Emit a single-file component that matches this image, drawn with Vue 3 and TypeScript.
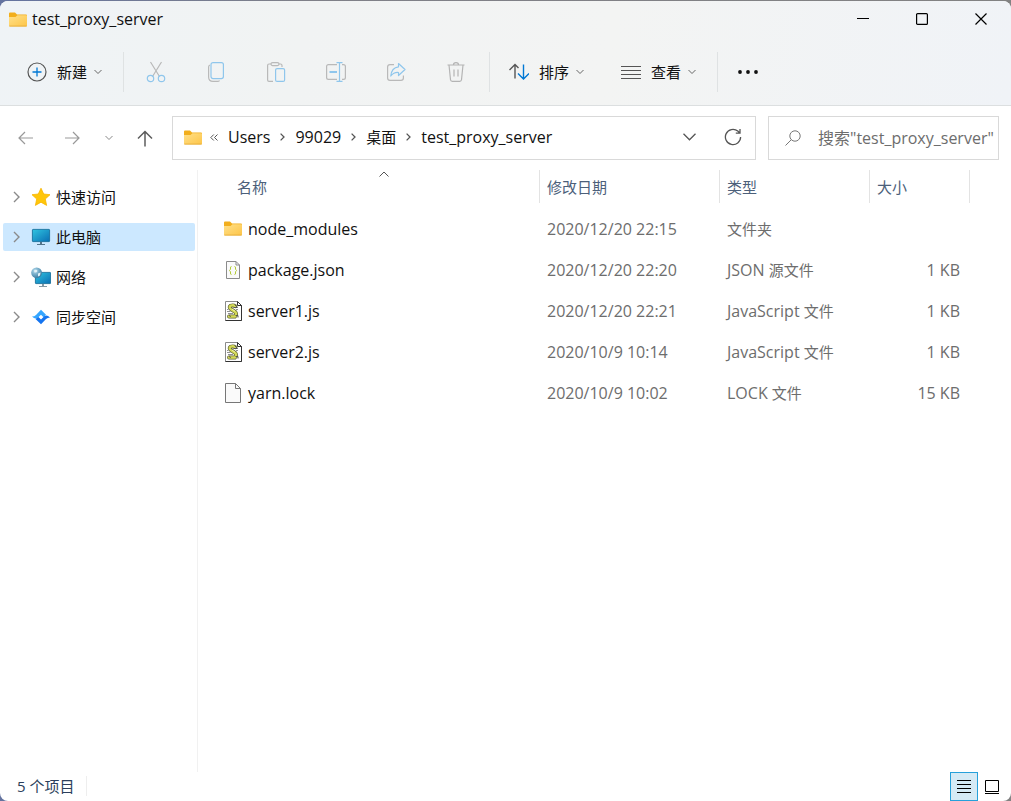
<script setup lang="ts">
import { ref } from 'vue'

interface Entry {
  name: string
  icon: 'folder' | 'json' | 'js' | 'blank'
  modified: string
  kind: string
  kindZh: string
  size: string
}

interface Place {
  label: string
  icon: 'star' | 'pc' | 'network' | 'sync'
}

const entries: Entry[] = [
  { name: 'node_modules', icon: 'folder', modified: '2020/12/20 22:15', kind: '', kindZh: '文件夹', size: '' },
  { name: 'package.json', icon: 'json', modified: '2020/12/20 22:20', kind: 'JSON', kindZh: '源文件', size: '1 KB' },
  { name: 'server1.js', icon: 'js', modified: '2020/12/20 22:21', kind: 'JavaScript', kindZh: '文件', size: '1 KB' },
  { name: 'server2.js', icon: 'js', modified: '2020/10/9 10:14', kind: 'JavaScript', kindZh: '文件', size: '1 KB' },
  { name: 'yarn.lock', icon: 'blank', modified: '2020/10/9 10:02', kind: 'LOCK', kindZh: '文件', size: '15 KB' },
]

const places: Place[] = [
  { label: '快速访问', icon: 'star' },
  { label: '此电脑', icon: 'pc' },
  { label: '网络', icon: 'network' },
  { label: '同步空间', icon: 'sync' },
]

const crumbs = [
  { label: 'Users', zh: false },
  { label: '99029', zh: false },
  { label: '桌面', zh: true },
  { label: 'test_proxy_server', zh: false },
]

const selected = ref('此电脑')
const query = ref('')
</script>

<template>
  <div class="window">
    <svg class="defs" width="0" height="0" aria-hidden="true">
      <defs>
        <linearGradient id="folder-fill" x1="0" y1="0" x2="1" y2="1">
          <stop offset="0" stop-color="#ffe08a" />
          <stop offset="1" stop-color="#fdc548" />
        </linearGradient>
        <linearGradient id="screen-fill" x1="0" y1="0" x2="1" y2="1">
          <stop offset="0" stop-color="#2fc4e0" />
          <stop offset="1" stop-color="#0a6fb4" />
        </linearGradient>
        <radialGradient id="globe-fill" cx="0.35" cy="0.3" r="0.8">
          <stop offset="0" stop-color="#b5dcee" />
          <stop offset="1" stop-color="#2a7199" />
        </radialGradient>
        <symbol id="folder" viewBox="0 0 18 15">
          <path d="M0 1.500Q0 .5 1 .5H6L8 2.500H17Q18 2.500 18 3.500V7H0Z" fill="#f2ae1c" />
          <path d="M0 5H6.500L8.500 3.200H17.200Q18 3.200 18 4V13.500Q18 14.500 17 14.500H1Q0 14.500 0 13.500Z" fill="url(#folder-fill)" />
          <path d="M.3 14.100H17.700" stroke="#e3a936" stroke-width=".8" />
        </symbol>
        <symbol id="chevron-down" viewBox="0 0 8 6">
          <path d="M.5 1L4 4.500L7.500 1" fill="none" stroke="currentColor" />
        </symbol>
        <symbol id="chevron-right" viewBox="0 0 7 12">
          <path d="M1 1L6 6L1 11" fill="none" stroke="currentColor" stroke-width="1.400" />
        </symbol>
      </defs>
    </svg>

    <header class="chrome">
      <div class="titlebar">
        <svg class="folder" width="18" height="15"><use href="#folder" /></svg>
        <h1>test_proxy_server</h1>
        <button class="caption" aria-label="最小化">
          <svg width="12" height="12" viewBox="0 0 12 12"><path d="M0 5.500H12" stroke="#000" /></svg>
        </button>
        <button class="caption" aria-label="最大化">
          <svg width="12" height="12" viewBox="0 0 12 12"><rect x=".6" y=".6" width="10.800" height="10.800" rx="1" fill="none" stroke="#000" stroke-width="1.200" /></svg>
        </button>
        <button class="caption" aria-label="关闭">
          <svg width="12" height="12" viewBox="0 0 12 12"><path d="M.5 .5L11.500 11.500M11.500 .5L.5 11.500" stroke="#000" stroke-width="1.200" /></svg>
        </button>
      </div>

      <div class="toolbar" role="toolbar">
        <button class="command create">
          <svg width="20" height="20" viewBox="0 0 20 20" fill="none">
            <circle cx="10" cy="10" r="9" stroke="#555" stroke-width="1.200" />
            <path d="M10 5.500V14.500M5.500 10H14.500" stroke="#0078d4" stroke-width="1.300" />
          </svg>
          <span>新建</span>
          <svg class="drop" width="8" height="6"><use href="#chevron-down" /></svg>
        </button>
        <i class="rule"></i>
        <div class="actions">
          <button class="action" disabled aria-label="剪切">
            <svg width="20" height="22" viewBox="0 0 20 22" fill="none" stroke-width="1.200">
              <path d="M4.500 1L13.500 15.500M15.500 1L6.500 15.500" stroke="#b9b9b9" />
              <circle cx="4.500" cy="17.500" r="3.200" stroke="#8fc6ec" />
              <circle cx="15.500" cy="17.500" r="3.200" stroke="#8fc6ec" />
            </svg>
          </button>
          <button class="action" disabled aria-label="复制">
            <svg width="20" height="22" viewBox="0 0 20 22" fill="none" stroke-width="1.200">
              <path d="M4 4Q2.600 4.500 2.600 6V16Q2.600 20.400 7 20.400H11.500Q13 20.400 13.500 19.400" stroke="#b9b9b9" />
              <rect x="5" y="1.600" width="12.400" height="16" rx="2" stroke="#8fc6ec" />
            </svg>
          </button>
          <button class="action" disabled aria-label="粘贴">
            <svg width="20" height="22" viewBox="0 0 20 22" fill="none" stroke-width="1.200">
              <path d="M5 3H3Q1.600 3 1.600 4.400V19Q1.600 20.400 3 20.400H7M13 3H14.500Q16 3 16 4.400V6" stroke="#b9b9b9" />
              <rect x="5" y="1.600" width="8" height="3" rx="1.500" stroke="#b9b9b9" />
              <rect x="9.600" y="7.600" width="9" height="12.800" rx="1.500" stroke="#8fc6ec" />
            </svg>
          </button>
          <button class="action" disabled aria-label="重命名">
            <svg width="22" height="22" viewBox="0 0 22 22" fill="none" stroke-width="1.200">
              <path d="M12 3.600H3.500Q1.600 3.600 1.600 5.500V16.500Q1.600 18.400 3.500 18.400H12M17 3.600H18.500Q20.400 3.600 20.400 5.500V16.500Q20.400 18.400 18.500 18.400H17" stroke="#b9b9b9" />
              <path d="M11.500 1.600H17.500M14.500 1.600V20.400M11.500 20.400H17.500" stroke="#8fc6ec" />
              <path d="M4.500 11H12" stroke="#8fc6ec" stroke-width="1.800" />
            </svg>
          </button>
          <button class="action" disabled aria-label="共享">
            <svg width="20" height="20" viewBox="0 0 20 20" fill="none" stroke-width="1.200" stroke-linejoin="round">
              <path d="M8 2.600H4Q1.600 2.600 1.600 5V16Q1.600 18.400 4 18.400H15Q17.400 18.400 17.400 16V13.500" stroke="#b9b9b9" />
              <path d="M12.500 1.500L19 7.500L12.500 13.500V10.500Q8 10 4.800 14Q5.500 5.500 12.500 4.800Z" stroke="#8fc6ec" />
            </svg>
          </button>
          <button class="action" disabled aria-label="删除">
            <svg width="20" height="22" viewBox="0 0 20 22" fill="none" stroke="#b4b4b4" stroke-width="1.200">
              <path d="M1.500 4H18.500M7.400 4Q7.400 1.600 10 1.600Q12.600 1.600 12.600 4M3 4L4.500 18.800Q4.700 20.400 6.300 20.400H13.700Q15.300 20.400 15.500 18.800L17 4M8 8.500V15.500M12 8.500V15.500" />
            </svg>
          </button>
        </div>
        <i class="rule"></i>
        <button class="command">
          <svg width="20" height="20" viewBox="0 0 20 20" fill="none" stroke-width="1.400">
            <path d="M6 16.500V2.500M.5 8L6 2.500L9.500 6" stroke="#555" />
            <path d="M14.500 2.500V17M9 11.500L14.500 17L20 11.500" stroke="#0078d4" />
          </svg>
          <span>排序</span>
          <svg class="drop" width="8" height="6"><use href="#chevron-down" /></svg>
        </button>
        <button class="command">
          <svg width="20" height="14" viewBox="0 0 20 14"><path d="M0 1.500H20M0 5.500H20M0 9.500H20M0 13.500H20" stroke="#555" /></svg>
          <span>查看</span>
          <svg class="drop" width="8" height="6"><use href="#chevron-down" /></svg>
        </button>
        <i class="rule"></i>
        <button class="action" aria-label="更多">
          <svg width="20" height="4" viewBox="0 0 20 4" fill="#111"><circle cx="2" cy="2" r="1.900" /><circle cx="10" cy="2" r="1.900" /><circle cx="18" cy="2" r="1.900" /></svg>
        </button>
      </div>
    </header>

    <nav class="navbar" aria-label="导航">
      <button class="step" aria-label="后退">
        <svg width="16" height="14" viewBox="0 0 16 14" fill="none" stroke="#999" stroke-width="1.200"><path d="M15 7H1M7 1L1 7L7 13" /></svg>
      </button>
      <button class="step" aria-label="前进">
        <svg width="16" height="14" viewBox="0 0 16 14" fill="none" stroke="#999" stroke-width="1.200"><path d="M1 7H15M9 1L15 7L9 13" /></svg>
      </button>
      <button class="step recent" aria-label="最近位置">
        <svg width="8" height="6"><use href="#chevron-down" /></svg>
      </button>
      <button class="step up" aria-label="上移">
        <svg width="16" height="17" viewBox="0 0 16 17" fill="none" stroke="#5c5c5c" stroke-width="1.500"><path d="M8 16.500V1.500M1 8.500L8 1.500L15 8.500" /></svg>
      </button>
      <div class="address">
        <svg class="folder" width="18" height="15"><use href="#folder" /></svg>
        <svg class="more" width="8" height="7" viewBox="0 0 8 7" fill="none" stroke="#555"><path d="M3.800 .5L.8 3.500L3.800 6.500M7.500 .5L4.500 3.500L7.500 6.500" /></svg>
        <template v-for="(crumb, i) in crumbs" :key="crumb.label">
          <svg v-if="i > 0" class="sep" width="5" height="8" viewBox="0 0 5 8" fill="none" stroke="#555" stroke-width="1.300"><path d="M.6 .6L4 4L.6 7.400" /></svg>
          <a href="#" :class="{ zh: crumb.zh }">{{ crumb.label }}</a>
        </template>
        <button class="tool first" aria-label="历史记录">
          <svg width="13" height="8" viewBox="0 0 13 8" fill="none" stroke="#555" stroke-width="1.300"><path d="M.5 .8L6.500 6.800L12.500 .8" /></svg>
        </button>
        <button class="tool" aria-label="刷新">
          <svg width="18" height="18" viewBox="0 0 18 18" fill="none" stroke="#555" stroke-width="1.300"><path d="M16.600 9A7.600 7.600 0 1 1 13.800 3.100L15.800 5M16 1V5.200H11.800" /></svg>
        </button>
      </div>
      <label class="search">
        <svg width="16" height="16" viewBox="0 0 16 16" fill="none" stroke="#777"><circle cx="10" cy="6" r="5.200" /><path d="M6.300 9.700L.5 15.500" /></svg>
        <input v-model="query" type="text" aria-label="搜索" placeholder="搜索&quot;test_proxy_server&quot;">
      </label>
    </nav>

    <main class="body">
      <aside class="places">
        <button
          v-for="place in places"
          :key="place.label"
          class="place"
          :class="{ on: place.label === selected }"
          @click="selected = place.label"
        >
          <svg class="expand" width="7" height="12"><use href="#chevron-right" /></svg>
          <svg v-if="place.icon === 'star'" width="20" height="20" viewBox="0 0 20 20"><path d="M10 1.200L12.700 7L19 7.700L14.300 12L15.600 18.400L10 15.200L4.400 18.400L5.700 12L1 7.700L7.300 7Z" fill="#ffc60a" stroke="#f8b500" stroke-width=".8" stroke-linejoin="round" /></svg>
          <svg v-else-if="place.icon === 'pc'" width="20" height="20" viewBox="0 0 20 20"><rect x="1.400" y="2.400" width="17.200" height="12.200" rx=".6" fill="url(#screen-fill)" stroke="#0b6794" stroke-width=".8" /><path d="M9 15H11V17H14V18H6V17H9Z" fill="#53748a" /></svg>
          <svg v-else-if="place.icon === 'network'" width="20" height="20" viewBox="0 0 20 20"><rect x="4.400" y="5.400" width="15.200" height="11.200" rx=".6" fill="url(#screen-fill)" stroke="#0b6794" stroke-width=".8" /><path d="M11 17H13V19H16V20H8V19H11Z" fill="#8499a5" /><circle cx="5.600" cy="5.800" r="5.400" fill="url(#globe-fill)" /><path d="M3 3.500Q5.500 2 6.500 4Q5.500 6 3.500 5.500ZM7 6.500L9.500 5.500L9 8.500L7 9.500Z" fill="#e3f2f7" /></svg>
          <svg v-else width="20" height="20" viewBox="0 0 20 20">
            <path d="M1 9.500Q3.500 9.500 5 8L10 2.800L15 7.700L12.500 10.200L10 7.700L6.500 11Q4 12.500 1 9.500Z" fill="#35a6ff" />
            <path d="M19 10.500Q16.500 10.500 15 12L10 17.200L4.500 12L7.500 10L10 12.500L13.500 9Q16 7.500 19 10.500Z" fill="#1474f0" />
          </svg>
          <span>{{ place.label }}</span>
        </button>
      </aside>

      <section class="files">
        <table>
          <colgroup>
            <col class="c-name"><col class="c-date"><col class="c-type"><col class="c-size"><col>
          </colgroup>
          <thead>
            <tr>
              <th scope="col" aria-sort="ascending">
                <div class="head name">
                  名称
                  <svg class="sort" width="10" height="6" viewBox="0 0 10 6" fill="none" stroke="#555"><path d="M.5 5.500L5 1L9.500 5.500" /></svg>
                </div>
              </th>
              <th scope="col"><div class="head">修改日期</div></th>
              <th scope="col"><div class="head">类型</div></th>
              <th scope="col"><div class="head">大小</div></th>
              <td></td>
            </tr>
          </thead>
          <tbody>
            <tr v-for="entry in entries" :key="entry.name">
              <td>
                <div class="file">
                  <svg v-if="entry.icon === 'folder'" width="18" height="15"><use href="#folder" /></svg>
                  <svg v-else-if="entry.icon === 'json'" width="18" height="20" viewBox="0 0 18 20" fill="none">
                    <path d="M2.500 1.500H12L15.500 5V18.500H2.500Z" fill="#fafafa" stroke="#8b8b8b" />
                    <path d="M12 1.500V5H15.500" stroke="#8b8b8b" />
                    <path d="M7.500 6.500Q6.300 6.500 6.500 8V9.200L5.500 10.500L6.500 11.800V13Q6.300 14.500 7.500 14.500M10.500 6.500Q11.700 6.500 11.500 8V9.200L12.500 10.500L11.500 11.800V13Q11.700 14.500 10.500 14.500" stroke="#b3cc35" />
                  </svg>
                  <svg v-else-if="entry.icon === 'js'" width="18" height="20" viewBox="0 0 18 20" fill="none">
                    <path d="M1.500 .5H13.500L17.500 4.500V19.500H1.500Z" fill="#fff" stroke="#8a8a8a" />
                    <path d="M1.500 19.500H17.500V4.500L13.500 .5V4.500H17.500" stroke="#333" />
                    <path d="M11.500 5.200Q9.500 3.700 6.500 4.700Q4.500 6.200 7 8.200L11.500 11.200Q13 13.500 11 15.500H5" stroke="#5d6030" stroke-width="3.800" stroke-linecap="round" />
                    <path d="M11.500 5.200Q9.500 3.700 6.500 4.700Q4.500 6.200 7 8.200L11.500 11.200Q13 13.500 11 15.500H5" stroke="#d3d957" stroke-width="2.400" stroke-linecap="round" />
                    <path d="M10.500 3.500L13.500 6.500H9.500M5 14.500L7 15.500M11.500 14.500H14V16.500" stroke="#555" />
                    <path d="M3 8.500H4.500M3 10.500H6.500M4 12.500H9M12 8.500H14" stroke="#909090" />
                    <path d="M8 8L11 10.200" stroke="#f3f5ae" />
                  </svg>
                  <svg v-else width="18" height="20" viewBox="0 0 18 20" fill="none">
                    <path d="M1.500 .5H11.500L16.500 5.500V19.500H1.500Z" fill="#fafafa" stroke="#777" />
                    <path d="M11.500 .5V5.500H16.500" stroke="#777" />
                  </svg>
                  <span>{{ entry.name }}</span>
                </div>
              </td>
              <td>{{ entry.modified }}</td>
              <td>{{ entry.kind }} <span class="zh">{{ entry.kindZh }}</span></td>
              <td class="size">{{ entry.size }}</td>
              <td></td>
            </tr>
          </tbody>
        </table>
      </section>
    </main>

    <footer class="status">
      <p>5 个项目</p>
      <button class="view on" aria-label="详细信息">
        <svg width="14" height="14" viewBox="0 0 14 14"><path d="M0 .5H14M0 4.500H14M0 8.500H14M0 12.500H14" stroke="#000" /></svg>
      </button>
      <button class="view" aria-label="大图标">
        <svg width="14" height="14" viewBox="0 0 14 14" fill="none" stroke="#000"><path d="M.5 .5H13.500V11.500H.5ZM0 13.500H14" /></svg>
      </button>
    </footer>
  </div>
</template>

<style>
body {
  margin: 0;
  background: linear-gradient(90deg, #64739f 0%, #7f8088 30%, #828282 100%);
}
#app {
  padding-top: 1px;
}
</style>

<style scoped>
.window {
  display: flex;
  flex-direction: column;
  min-height: calc(100vh - 1px);
  border-radius: 8px;
  overflow: hidden;
  background: #fff;
  color: #111;
  font: 16px/20px "Open Sans", "Noto Sans CJK SC", sans-serif;
}
.defs {
  position: absolute;
}
svg {
  display: block;
  flex: none;
}
button {
  display: flex;
  align-items: center;
  justify-content: center;
  margin: 0;
  padding: 0;
  border: 0;
  background: none;
  color: inherit;
  font: inherit;
}
.zh {
  font-size: 15px;
}

.chrome {
  background: linear-gradient(100deg, #eff3f6 0%, #f1f3f3 30%, #f3f4f3 60%, #f0f3f7 100%);
  border-bottom: 1px solid #dcdfe0;
}
.titlebar {
  display: flex;
  align-items: center;
  height: 36px;
  margin-bottom: 1px;
  padding: 0 1px 0 9px;
}
.titlebar h1 {
  flex: 1;
  margin: 0 0 0 5px;
  font-size: 16px;
  font-weight: 400;
}
.caption {
  width: 59px;
  height: 36px;
}
.toolbar {
  display: flex;
  align-items: center;
  height: 67px;
}
.command {
  height: 40px;
  padding: 0 18px 0 19px;
  font-size: 15px;
}
.command span {
  margin: 0 7px 0 10px;
}
.create {
  padding: 0 21px 0 27px;
}
.drop {
  color: #666;
}
.rule {
  width: 1px;
  height: 40px;
  background: #dfe2e3;
}
.command + .rule:not(.create + .rule) {
  margin-left: 3px;
}
.actions {
  display: flex;
  margin: 0 3px 0 2px;
}
.action {
  width: 60px;
  height: 40px;
}

.navbar {
  display: flex;
  align-items: center;
  padding: 10px 12px 10px 3px;
}
.step {
  width: 46px;
  height: 40px;
}
.recent {
  width: 28px;
  color: #888;
}
.up {
  width: 44px;
}
.address,
.search {
  display: flex;
  align-items: center;
  box-sizing: border-box;
  height: 44px;
  border: 1px solid #d9d9d9;
}
.address {
  flex: 1;
  margin: 0 12px 0 5px;
  padding: 0 1px 2px 11px;
}
.address a {
  color: #111;
  text-decoration: none;
}
.more {
  margin: 0 10px 0 8px;
}
.sep {
  margin: 0 10px;
}
.tool {
  width: 43px;
  height: 40px;
}
.first {
  margin-left: auto;
}
.search {
  width: 231px;
  padding-left: 16px;
}
.search input {
  flex: 1;
  min-width: 0;
  margin-left: 17px;
  padding: 0;
  border: 0;
  outline: 0;
  background: none;
  font: inherit;
}
.search input::placeholder {
  color: #6d6d6d;
  opacity: 1;
}

.body {
  display: flex;
  flex: 1;
}
.places {
  box-sizing: border-box;
  width: 198px;
  padding: 13px 2px 0 3px;
  border-right: 1px solid #f1f1f1;
}
.place {
  justify-content: flex-start;
  width: 100%;
  height: 28px;
  margin-bottom: 12px;
  padding-left: 10px;
  border-radius: 2px;
  font-size: 15px;
}
.place.on {
  background: #cce8ff;
}
.place span {
  margin-left: 5px;
}
.expand {
  margin-right: 11px;
  color: #8a8a8a;
}

.files {
  flex: 1;
  min-width: 0;
}
table {
  width: 100%;
  table-layout: fixed;
  border-collapse: collapse;
  color: #6d6d6d;
}
.c-name {
  width: 342px;
}
.c-date {
  width: 180px;
}
.c-type {
  width: 150px;
}
.c-size {
  width: 100px;
}
th {
  height: 38px;
  padding: 0;
  vertical-align: top;
  text-align: left;
  font-size: 15px;
  font-weight: 400;
  color: #4c607a;
}
.head {
  position: relative;
  height: 33px;
  padding-left: 7px;
  border-right: 1px solid #e3e3e3;
  line-height: 35px;
}
.head.name {
  padding-left: 39px;
}
.sort {
  position: absolute;
  top: 1px;
  left: 181px;
}
tbody td {
  height: 41px;
  padding: 0 0 0 7px;
  white-space: nowrap;
}
tbody td:first-child {
  padding-left: 26px;
}
tbody td.size {
  padding: 0 10px 0 0;
  text-align: right;
}
.file {
  display: flex;
  align-items: center;
  gap: 6px;
  color: #111;
}

.status {
  display: flex;
  align-items: center;
  height: 29px;
  padding-right: 5px;
  color: #2b3f5c;
  font-size: 15px;
}
.status p {
  margin: 0 auto 2px 0;
  padding: 0 12px 0 17px;
  border-right: 1px solid #eee;
}
.view {
  box-sizing: border-box;
  width: 28px;
  height: 29px;
}
.view.on {
  border: 1px solid #26a0da;
  background: #d5eaf5;
}
</style>
